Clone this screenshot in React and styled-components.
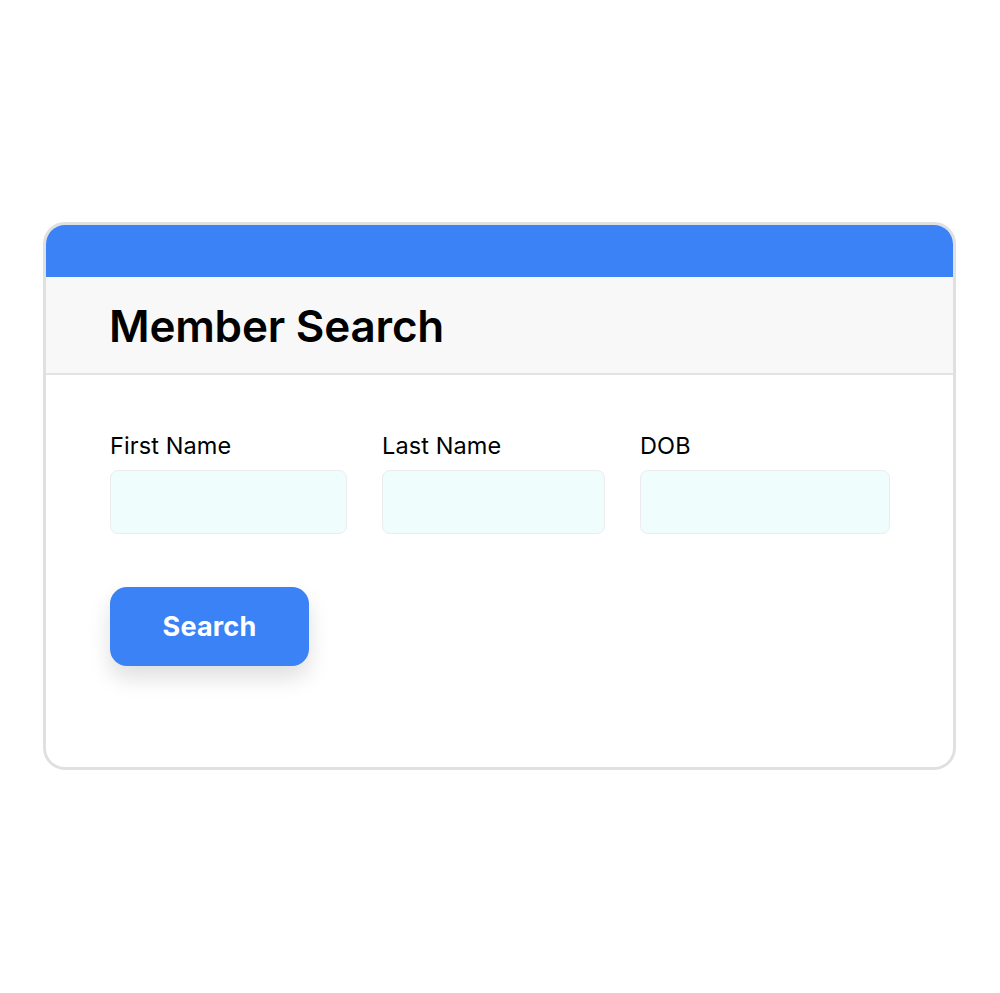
import React from 'react';
import styled, { createGlobalStyle } from 'styled-components';

const GlobalStyle = createGlobalStyle`
  html, body {
    margin: 0;
    padding: 0;
    background: #fff;
    font-family: 'Inter', 'Noto Sans', sans-serif;
    color: #000;
  }
  * { box-sizing: border-box; }
`;

const Page = styled.div`
  width: 1000px;
  height: 993px;
  padding: 222px 0 0 43px;
`;

const Card = styled.div`
  width: 913px;
  height: 548px;
  border: 3px solid #e0e0e0;
  border-radius: 22px;
  overflow: hidden;
  background: #fff;
  display: flex;
  flex-direction: column;
`;

const TopBar = styled.div`
  height: 52px;
  background: #3b82f6;
`;

const TitleBand = styled.div`
  height: 98px;
  background: #f8f8f8;
  border-bottom: 2px solid #e3e3e3;
  display: flex;
  align-items: center;
  padding-left: 63px;
`;

const Title = styled.h1`
  margin: 0;
  margin-top: 2px;
  font-size: 44px;
  font-weight: 600;
  letter-spacing: -0.2px;
`;

const Body = styled.div`
  padding: 57px 0 0 64px;
`;

const FieldRow = styled.div`
  display: grid;
  grid-template-columns: 237px 223px 250px;
  column-gap: 35px;
`;

const Field = styled.label`
  display: flex;
  flex-direction: column;
  gap: 10px;
`;

const Label = styled.span`
  font-size: 23.5px;
  line-height: 28px;
  font-weight: 400;
  letter-spacing: 0.1px;
`;

const Input = styled.div`
  height: 64px;
  background: #effefd;
  border: 1px solid #ececec;
  border-radius: 8px;
`;

const Button = styled.button`
  margin-top: 53px;
  width: 199px;
  height: 79px;
  border: none;
  border-radius: 17px;
  background: #3b82f6;
  color: #fff;
  font-family: inherit;
  font-size: 27px;
  font-weight: 700;
  letter-spacing: 0.2px;
  box-shadow: 0 12px 22px rgba(0, 0, 0, 0.13);
  cursor: pointer;
`;

const fields = [
  { label: 'First Name' },
  { label: 'Last Name' },
  { label: 'DOB' },
];

export default function App() {
  return (
    <Page>
      <GlobalStyle />
      <Card>
        <TopBar />
        <TitleBand>
          <Title>Member Search</Title>
        </TitleBand>
        <Body>
          <FieldRow>
            {fields.map(f => (
              <Field key={f.label}>
                <Label>{f.label}</Label>
                <Input />
              </Field>
            ))}
          </FieldRow>
          <Button>Search</Button>
        </Body>
      </Card>
    </Page>
  );
}
